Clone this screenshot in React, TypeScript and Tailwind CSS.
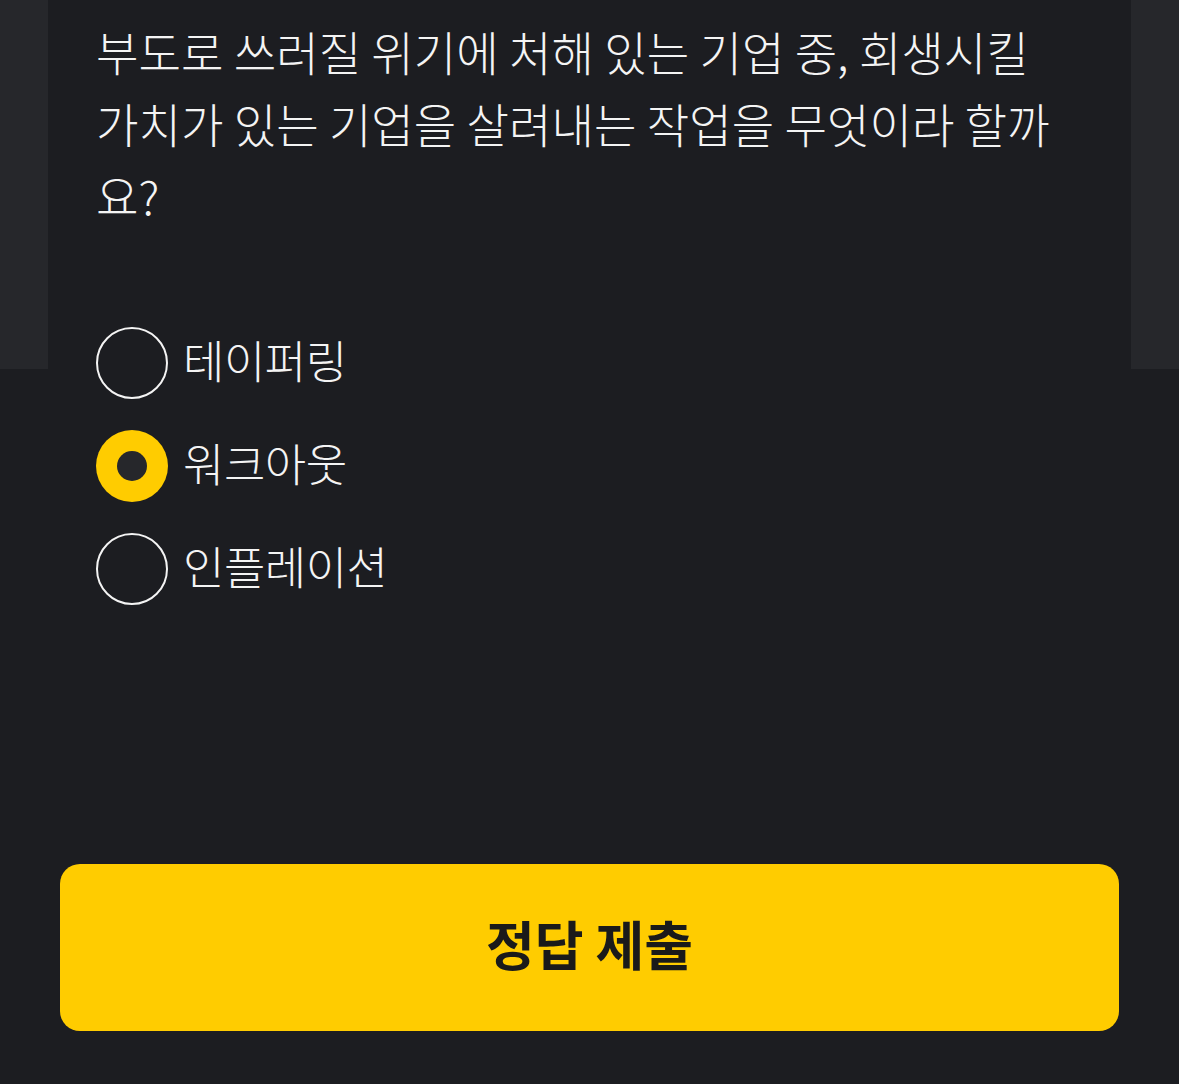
import { useState } from 'react'

const OPTIONS = ['테이퍼링', '워크아웃', '인플레이션']

const font = { fontFamily: '"Noto Sans CJK KR", "Noto Sans", sans-serif' }

function Radio({ checked }: { checked: boolean }) {
  if (checked) {
    return (
      <span className="flex h-[72px] w-[72px] shrink-0 items-center justify-center rounded-full bg-[#ffcc00]">
        <span className="h-[30px] w-[30px] rounded-full bg-[#26272b]" />
      </span>
    )
  }
  return <span className="h-[72px] w-[72px] shrink-0 rounded-full border-[2.5px] border-[#f4f4f4]" />
}

export default function App() {
  const [selected, setSelected] = useState(1)

  return (
    <div
      className="flex h-[1084px] flex-col bg-[linear-gradient(to_bottom,#26272b_369px,#1c1d21_369px)]"
      style={font}
    >
      <div className="mx-12 flex flex-1 flex-col bg-[#1c1d21] pl-12 pr-14 pt-[15px]">
        <p className="text-[46.2px] font-light leading-[72px] text-[#f4f4f4]">
          부도로 쓰러질 위기에 처해 있는 기업 중, 회생시킬 가치가 있는 기업을 살려내는 작업을 무엇이라 할까요?
        </p>

        <div className="mt-[96px] flex flex-col gap-[31px]">
          {OPTIONS.map((label, i) => (
            <button
              key={label}
              type="button"
              onClick={() => setSelected(i)}
              className="flex items-center gap-[15px] text-left"
            >
              <Radio checked={selected === i} />
              <span className="pb-2 text-[45px] font-light leading-none tracking-[-0.5px] text-[#f4f4f4]">
                {label}
              </span>
            </button>
          ))}
        </div>
      </div>

      <div className="bg-[#1c1d21] px-[60px] pb-[53px]">
        <button
          type="button"
          className="flex h-[167px] w-full items-center justify-center rounded-[20px] bg-[#ffcc00] pb-2 text-[53px] font-bold text-[#1a1a1a]"
        >
          정답 제출
        </button>
      </div>
    </div>
  )
}
